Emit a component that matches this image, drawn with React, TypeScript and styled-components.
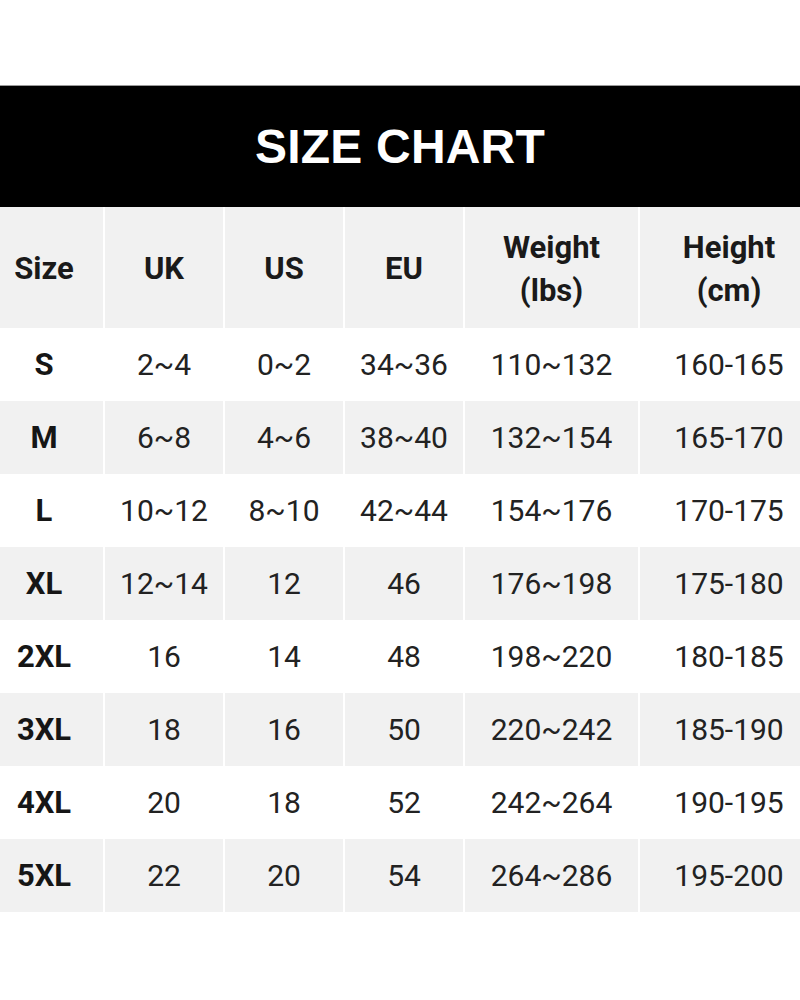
import styled, { createGlobalStyle } from 'styled-components'

const GlobalStyle = createGlobalStyle`
  html, body {
    margin: 0;
    padding: 0;
    background: #fff;
  }
  body {
    font-family: Roboto, 'Noto Sans', sans-serif;
    color: #1c1c1c;
  }
`

const headers = [['Size'], ['UK'], ['US'], ['EU'], ['Weight', '(lbs)'], ['Height', '(cm)']]

const rows = [
  ['S', '2~4', '0~2', '34~36', '110~132', '160-165'],
  ['M', '6~8', '4~6', '38~40', '132~154', '165-170'],
  ['L', '10~12', '8~10', '42~44', '154~176', '170-175'],
  ['XL', '12~14', '12', '46', '176~198', '175-180'],
  ['2XL', '16', '14', '48', '198~220', '180-185'],
  ['3XL', '18', '16', '50', '220~242', '185-190'],
  ['4XL', '20', '18', '52', '242~264', '190-195'],
  ['5XL', '22', '20', '54', '264~286', '195-200'],
]

const App = () => {
  return (
    <Page>
      <GlobalStyle />
      <Banner>
        <Title>SIZE CHART</Title>
      </Banner>
      <Table>
        {headers.map((h, i) => (
          <HeadCell key={i} $first={i === 0}>
            {h.map((line) => (
              <span key={line}>{line}</span>
            ))}
          </HeadCell>
        ))}
        {rows.map((row, r) =>
          row.map((value, c) => (
            <Cell key={`${r}-${c}`} $shaded={r % 2 === 1} $first={c === 0}>
              {value}
            </Cell>
          ))
        )}
      </Table>
    </Page>
  )
}

export default App

const Page = styled.div`
  width: 800px;
  height: 1000px;
  overflow: hidden;
  padding-top: 85px;
  box-sizing: border-box;
`

const Banner = styled.div`
  height: 122px;
  background: #000;
  border-top: 1px solid #9a9a9a;
  box-sizing: border-box;
  display: flex;
  align-items: center;
  justify-content: center;
`

const Title = styled.h1`
  margin: 0;
  font-family: 'Liberation Sans', Arial, sans-serif;
  font-weight: 700;
  font-size: 48px;
  color: #fff;
  letter-spacing: 0.2px;
`

const Table = styled.div`
  display: grid;
  grid-template-columns: 118px 120px 120px 120px 175px 180px;
  grid-template-rows: 121px repeat(8, 73px);
  margin-left: -15px;
  width: 833px;
`

const HeadCell = styled.div<{ $first?: boolean }>`
  background: #f1f1f1;
  border-left: ${(p) => (p.$first ? 'none' : '2px solid #fff')};
  display: flex;
  flex-direction: column;
  align-items: center;
  justify-content: center;
  font-weight: 700;
  font-size: 31px;
  line-height: 43px;
  color: #1a1a1a;
  padding-top: 2px;
`

const Cell = styled.div<{ $shaded?: boolean; $first?: boolean }>`
  background: ${(p) => (p.$shaded ? '#f1f1f1' : '#fff')};
  border-left: ${(p) => (p.$first ? 'none' : '2px solid #fff')};
  display: flex;
  align-items: center;
  justify-content: center;
  font-size: ${(p) => (p.$first ? '31px' : '30px')};
  font-weight: ${(p) => (p.$first ? 700 : 400)};
  color: ${(p) => (p.$first ? '#161616' : '#222')};
`
